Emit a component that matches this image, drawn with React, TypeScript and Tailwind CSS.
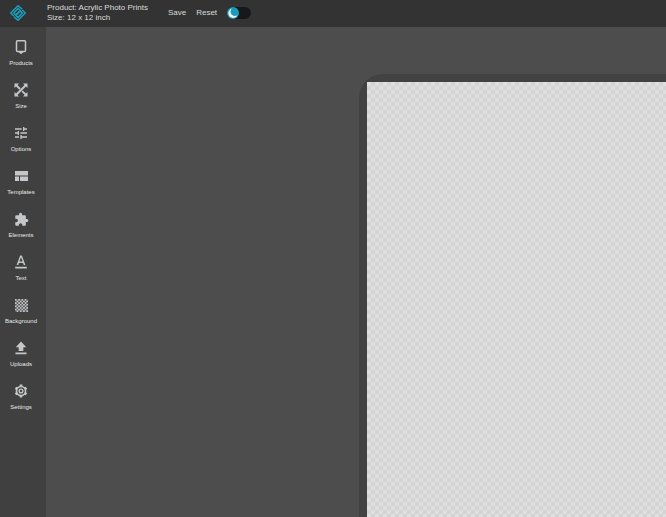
import { useState } from "react";
import type { ReactNode } from "react";
import { MdExtension, MdTune } from "react-icons/md";

function ProductsIcon() {
  return (
    <svg viewBox="0 0 14 16" className="h-4 w-[14px]" fill="none" stroke="currentColor" strokeWidth="1.500" aria-hidden="true">
      <rect x="2.500" y="1.800" width="9" height="10.700" rx="1" />
      <path d="M4.500 13h5L7 15.200z" fill="currentColor" stroke="none" />
    </svg>
  );
}

function SizeIcon() {
  return (
    <svg viewBox="0 0 14 14" className="size-[14px]" fill="none" stroke="currentColor" strokeWidth="1.900" aria-hidden="true">
      <path d="M2 2l4 4M8.200 8.200l4 4M2 12L12 2" />
      <path d="M.5.500h4.500L.5 5zM13.500.500V5L9 .500zM13.500 13.500H9L13.500 9zM.5 13.500V9L5 13.500z" fill="currentColor" stroke="none" />
    </svg>
  );
}

function TemplatesIcon() {
  return (
    <svg viewBox="0 0 13 10" className="h-[10px] w-[13px]" fill="currentColor" aria-hidden="true">
      <path d="M0 0h13v4.500H0zM0 5.500h4V10H0zM5 5.500h8V10H5z" />
    </svg>
  );
}

function TextIcon() {
  return (
    <svg viewBox="0 0 24 24" className="size-[14px]" fill="currentColor" aria-hidden="true">
      <path d="M10.500 1L4.500 17h2.800l1.200-3.500h7L16.700 17h2.800L13.500 1zM9.300 11.200L12 3.800l2.700 7.400zM2 20h20v3H2z" />
    </svg>
  );
}

function BackgroundIcon() {
  return (
    <svg viewBox="0 0 13 13" className="size-[13px]" fill="currentColor" aria-hidden="true">
      <defs>
        <pattern id="checks" width="3.250" height="3.250" patternUnits="userSpaceOnUse">
          <path d="M0 0h1.625v1.625H0zM1.625 1.625h1.625v1.625H1.625z" />
        </pattern>
      </defs>
      <rect width="13" height="13" fillOpacity="0.15" />
      <rect width="13" height="13" fill="url(#checks)" />
    </svg>
  );
}

function UploadIcon() {
  return (
    <svg viewBox="0 0 24 24" className="size-[14px]" fill="currentColor" aria-hidden="true">
      <path d="M12 1l9 9.500h-5V17H8v-6.500H3zM2.500 19.500h19v3h-19z" />
    </svg>
  );
}

function SettingsIcon() {
  return (
    <svg viewBox="0 0 24 24" className="size-[14px]" fill="none" stroke="currentColor" aria-hidden="true">
      <circle cx="12" cy="12" r="7.800" strokeWidth="2.800" />
      <path d="M12 1v4M12 19v4M2.500 6.500l3.500 2M18 15.500l3.500 2M2.500 17.500l3.500-2M18 8.500l3.500-2" strokeWidth="4.500" />
      <circle cx="12" cy="12" r="3.200" strokeWidth="2.400" />
    </svg>
  );
}

function Logo() {
  return (
    <svg viewBox="0 0 32 32" className="size-4" fill="none" stroke="currentColor" strokeWidth="2.800" aria-hidden="true">
      <path d="M24.500 8.500L16 1.500 1.500 16l6 6" />
      <path d="M7.500 23.500l8.500 7L30.500 16l-6-6" />
      <path d="M21 11.500L16 7l-8.500 9 4 4 8.500-8.500M11 20.500l5 4.500 8.500-9-4-4-8.500 8.500" />
    </svg>
  );
}

const tools: { label: string; icon: ReactNode }[] = [
  { label: "Products", icon: <ProductsIcon /> },
  { label: "Size", icon: <SizeIcon /> },
  { label: "Options", icon: <MdTune className="size-4" /> },
  { label: "Templates", icon: <TemplatesIcon /> },
  { label: "Elements", icon: <MdExtension className="size-[15px]" /> },
  { label: "Text", icon: <TextIcon /> },
  { label: "Background", icon: <BackgroundIcon /> },
  { label: "Uploads", icon: <UploadIcon /> },
  { label: "Settings", icon: <SettingsIcon /> },
];

function Header() {
  const [dark, setDark] = useState(true);

  return (
    <header className="flex h-[27px] shrink-0 items-center bg-[#333333] pb-[2px] text-[#dcdcdc]">
      <a href="#" aria-label="Home" className="ml-[10px] text-[#18a4c4]">
        <Logo />
      </a>
      <div className="ml-[21px] text-[8px] leading-[10px]">
        <p>Product: Acrylic Photo Prints</p>
        <p>Size: 12 x 12 inch</p>
      </div>
      <nav className="ml-5 flex gap-[10px] text-[8px] leading-[10px]">
        <button type="button">Save</button>
        <button type="button">Reset</button>
      </nav>
      <button
        type="button"
        role="switch"
        aria-checked={dark}
        aria-label="Dark mode"
        onClick={() => setDark(!dark)}
        className="ml-[10px] flex h-3 w-6 items-center rounded-full bg-[#16181c]"
      >
        <svg viewBox="0 0 24 24" className="size-3" aria-hidden="true">
          <circle cx="12" cy="12" r="12" fill="#1b9bb8" />
          <path d="M10 3a9.500 9.500 0 1 0 11 13A7.500 7.500 0 0 1 10 3z" fill="#ffffff" />
        </svg>
      </button>
    </header>
  );
}

export default function App() {
  return (
    <div className="flex h-screen flex-col overflow-hidden bg-[#4d4d4d] font-['Liberation_Sans',Arial,sans-serif]">
      <Header />
      <div className="flex min-h-0 flex-1">
        <aside className="flex w-[46px] shrink-0 flex-col bg-[#404040] pt-3 text-[#c4c6c8]">
          {tools.map((tool) => (
            <button
              key={tool.label}
              type="button"
              className="flex h-[43px] w-full shrink-0 flex-col items-center pr-1"
            >
              <span className="flex h-4 items-center">{tool.icon}</span>
              <span className="mt-1 text-[6px] leading-[8px] text-[#e8e8e8]">{tool.label}</span>
            </button>
          ))}
        </aside>
        <main className="flex min-w-0 flex-1 pt-[47px] pl-[313px]">
          <div className="flex flex-1 rounded-tl-[24px] bg-[#424242] pt-2 pl-2">
            <div className="flex-1 bg-[repeating-conic-gradient(#d4d4d5_0_25%,#dfdfe0_0_50%)] bg-size-[8px_8px]" />
          </div>
        </main>
      </div>
    </div>
  );
}
